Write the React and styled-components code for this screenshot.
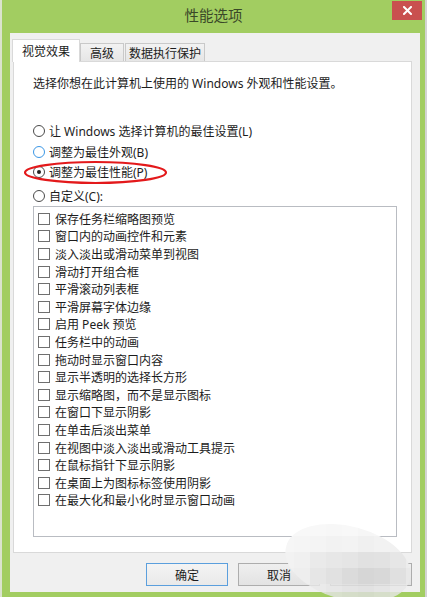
import React from 'react';
import styled, { createGlobalStyle } from 'styled-components';

const Global = createGlobalStyle`
  html, body { margin: 0; padding: 0; background: #fff; }
  body {
    font-family: "Noto Sans", "Noto Sans CJK SC", sans-serif;
    font-size: 12px;
    color: #1c1c1c;
  }
`;

const Page = styled.div`
  position: relative;
  width: 433px;
  height: 597px;
  display: flex;
  overflow: hidden;
  background: #fff;
`;

const LeftEdge = styled.div`
  width: 2px;
  background: #dbe3cf;
`;

const RightEdge = styled.div`
  flex: 1;
  border-left: 2px solid #d3d3d3;
  background: #fff;
`;

const Window = styled.div`
  width: 423px;
  display: flex;
  flex-direction: column;
  background: #a2cd61;
`;

const TitleBar = styled.div`
  height: 33px;
  display: grid;
  grid-template-columns: 1fr auto 1fr;
`;

const Title = styled.div`
  grid-column: 2;
  padding-top: 6px;
  font-family: "Noto Sans CJK SC", sans-serif;
  font-size: 14.5px;
  line-height: 18px;
  color: #3a4828;
`;

const CloseButton = styled.div`
  grid-column: 3;
  justify-self: end;
  margin: 1px 3px 0 0;
  width: 30px;
  height: 19px;
  background: #c9504f;
  display: flex;
  align-items: center;
  justify-content: center;
`;

const Frame = styled.div`
  flex: 1;
  padding: 0 5px 5px 8px;
  display: flex;
`;

const Body = styled.div`
  flex: 1;
  background: #f0f0f0;
  padding: 6px 8px 0 3px;
  display: flex;
  flex-direction: column;
`;

const TabRow = styled.div`
  height: 23px;
  display: flex;
  align-items: flex-end;
  margin-bottom: -1px;
  position: relative;
  z-index: 1;
`;

const Tab = styled.div`
  box-sizing: border-box;
  width: ${p => p.$w}px;
  height: ${p => (p.$active ? 23 : 18)}px;
  margin-left: ${p => p.$ml || 0}px;
  margin-bottom: ${p => (p.$active ? 0 : 1)}px;
  border: 1px solid ${p => (p.$active ? '#d9d9d9' : '#c9c9c9')};
  border-bottom: none;
  background: ${p => (p.$active ? '#fff' : 'linear-gradient(#f2f2f2, #e6e6e6)')};
  display: flex;
  align-items: center;
  justify-content: center;
  padding-top: ${p => (p.$active ? 0 : 1)}px;
  font-size: 12px;
  color: #1c1c1c;
  white-space: nowrap;
`;

const TabPanel = styled.div`
  flex: 1;
  background: #fff;
  border: 1px solid #d9d9d9;
  padding: 14px 14px 15px 19px;
  display: flex;
  flex-direction: column;
`;

const Desc = styled.div`
  line-height: 16px;
  white-space: nowrap;
`;

const RadioGroup = styled.div`
  margin-top: 31px;
  display: flex;
  flex-direction: column;
`;

const RadioRow = styled.div`
  display: flex;
  align-items: center;
  height: 16px;
  margin-top: ${p => p.$mt || 0}px;
  white-space: nowrap;
`;

const RadioCircle = styled.span`
  box-sizing: border-box;
  width: 12px;
  height: 12px;
  border-radius: 50%;
  border: 1px solid ${p => (p.$hover ? '#3b97e6' : '#4a4a4a')};
  background: #fff;
  margin-right: 4px;
  display: flex;
  align-items: center;
  justify-content: center;
  &::after {
    content: '';
    display: ${p => (p.$checked ? 'block' : 'none')};
    width: 4px;
    height: 4px;
    border-radius: 50%;
    background: #222;
  }
`;

const ListBox = styled.div`
  margin-top: 2px;
  height: 331px;
  box-sizing: border-box;
  border: 1px solid #b9bcc2;
  padding: 3px 0 0 4px;
  display: flex;
  flex-direction: column;
`;

const CheckRow = styled.div`
  height: 17.6px;
  display: flex;
  align-items: center;
  white-space: nowrap;
`;

const CheckBox = styled.span`
  box-sizing: border-box;
  width: 12px;
  height: 12px;
  border: 1px solid #6f6f6f;
  background: #fff;
  margin-right: 5px;
  flex-shrink: 0;
`;

const ButtonRow = styled.div`
  height: 39px;
  box-sizing: border-box;
  padding-top: 10px;
  display: flex;
  justify-content: flex-end;
  align-items: flex-start;
  gap: 10px;
`;

const Button = styled.div`
  box-sizing: border-box;
  width: 82px;
  height: 23px;
  border: 1px solid ${p => (p.$default ? '#5b9fdd' : '#adadad')};
  background: ${p => (p.$default ? 'linear-gradient(#f4f4f4, #e9e9e9)' : 'linear-gradient(#efefef, #e3e3e3)')};
  display: flex;
  align-items: center;
  justify-content: center;
  font-size: 12px;
  color: #1c1c1c;
`;

const Annotation = styled.svg`
  position: absolute;
  left: 22px;
  top: 159px;
  overflow: visible;
  pointer-events: none;
`;

const Mosaic = styled.div`
  position: absolute;
  left: 278px;
  top: 520px;
  width: 144px;
  height: 80px;
  clip-path: path('M 8.2 26.4 A 64 36 15 1 0 131.8 59.6 A 64 36 15 1 0 8.2 26.4 Z');
  display: grid;
  grid-template-columns: repeat(9, 16px);
  grid-auto-rows: 16px;
  pointer-events: none;
`;

const MosaicCell = styled.div`
  background: ${p => p.$c};
`;

const options = [
  '保存任务栏缩略图预览',
  '窗口内的动画控件和元素',
  '淡入淡出或滑动菜单到视图',
  '滑动打开组合框',
  '平滑滚动列表框',
  '平滑屏幕字体边缘',
  '启用 Peek 预览',
  '任务栏中的动画',
  '拖动时显示窗口内容',
  '显示半透明的选择长方形',
  '显示缩略图，而不是显示图标',
  '在窗口下显示阴影',
  '在单击后淡出菜单',
  '在视图中淡入淡出或滑动工具提示',
  '在鼠标指针下显示阴影',
  '在桌面上为图标标签使用阴影',
  '在最大化和最小化时显示窗口动画',
];

const mosaic = [
  [248, 248, 248, 247, 248, 246, 247, 248, 247],
  [246, 245, 244, 242, 243, 240, 242, 241, 239],
  [242, 240, 234, 231, 229, 225, 226, 230, 236],
  [240, 238, 230, 225, 219, 214, 216, 224, 232],
  [238, 236, 232, 228, 224, 222, 226, 230, 234],
];

export default function App() {
  return (
    <>
      <Global />
      <Page>
        <LeftEdge />
        <Window>
          <TitleBar>
            <Title>性能选项</Title>
            <CloseButton>
              <svg width="9" height="9" viewBox="0 0 9 9">
                <path d="M1 1 L8 8 M8 1 L1 8" stroke="#fff" strokeWidth="2" strokeLinecap="square" />
              </svg>
            </CloseButton>
          </TitleBar>
          <Frame>
            <Body>
              <TabRow>
                <Tab $active $w={68} $ml={-1}>视觉效果</Tab>
                <Tab $w={44}>高级</Tab>
                <Tab $w={80} $ml={1}>数据执行保护</Tab>
              </TabRow>
              <TabPanel>
                <Desc>选择你想在此计算机上使用的 Windows 外观和性能设置。</Desc>
                <RadioGroup>
                  <RadioRow><RadioCircle />让 Windows 选择计算机的最佳设置(L)</RadioRow>
                  <RadioRow $mt={5}><RadioCircle $hover />调整为最佳外观(B)</RadioRow>
                  <RadioRow $mt={4}><RadioCircle $checked />调整为最佳性能(P)</RadioRow>
                  <RadioRow $mt={8}><RadioCircle />自定义(C):</RadioRow>
                </RadioGroup>
                <ListBox>
                  {options.map(o => (
                    <CheckRow key={o}><CheckBox />{o}</CheckRow>
                  ))}
                </ListBox>
              </TabPanel>
              <ButtonRow>
                <Button $default>确定</Button>
                <Button>取消</Button>
                <Button>应用(A)</Button>
              </ButtonRow>
            </Body>
          </Frame>
        </Window>
        <RightEdge />
        <Annotation width="146" height="28" viewBox="0 0 146 28">
          <ellipse cx="73.5" cy="13.5" rx="70.5" ry="10.5" fill="none" stroke="#e3191b" strokeWidth="2.2" />
        </Annotation>
        <Mosaic>
          {mosaic.flatMap((row, r) =>
            row.map((v, c) => (
              <MosaicCell key={`${r}-${c}`} $c={`rgba(${v},${v},${v},${r === 4 ? 0.82 : 1})`} />
            ))
          )}
        </Mosaic>
      </Page>
    </>
  );
}
